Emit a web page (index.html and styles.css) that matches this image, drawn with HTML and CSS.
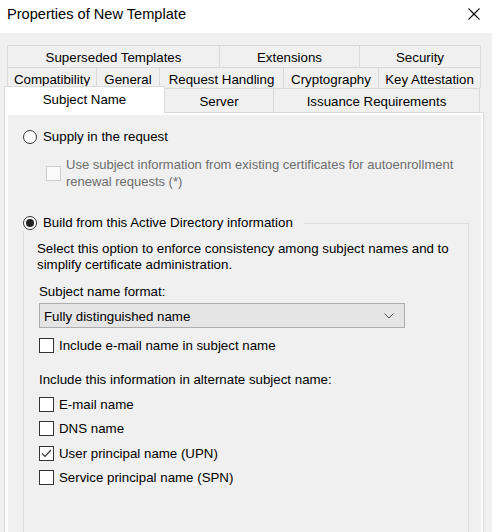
FILE: index.html
```html
<!DOCTYPE html>
<html>
<head>
<meta charset="utf-8">
<title>Properties of New Template</title>
<link rel="stylesheet" href="styles.css">
</head>
<body>
<div class="window">
  <div class="titlebar">
    <span class="title">Properties of New Template</span>
    <svg class="close" width="12" height="12" viewBox="0 0 12 12"><path d="M0.5 0.5 L11.5 11.5 M11.5 0.5 L0.5 11.5" stroke="#000" stroke-width="1.1" fill="none"/></svg>
  </div>
  <div class="tabs">
    <div class="tabrow row1">
      <div class="tab t-superseded">Superseded Templates</div>
      <div class="tab t-extensions">Extensions</div>
      <div class="tab t-security">Security</div>
    </div>
    <div class="tabrow row2">
      <div class="tab t-compat">Compatibility</div>
      <div class="tab t-general">General</div>
      <div class="tab t-request">Request Handling</div>
      <div class="tab t-crypto">Cryptography</div>
      <div class="tab t-key">Key Attestation</div>
    </div>
    <div class="tabrow row3">
      <div class="tab selected t-subject">Subject Name</div>
      <div class="tab t-server">Server</div>
      <div class="tab t-issuance">Issuance Requirements</div>
    </div>
  </div>
  <div class="panel">
    <div class="page">
      <div class="radio-row">
        <span class="radio"></span>
        <span>Supply in the request</span>
      </div>
      <div class="sub-check disabled">
        <span class="box"></span>
        <span class="sub-text">Use subject information from existing certificates for autoenrollment<br>renewal requests (*)</span>
      </div>
      <div class="group">
        <div class="legend radio-row">
          <span class="radio checked"><span class="dot"></span></span>
          <span>Build from this Active Directory information</span>
        </div>
        <div class="desc">Select this option to enforce consistency among subject names and to<br>simplify certificate administration.</div>
        <div class="label">Subject name format:</div>
        <div class="combo">
          <span>Fully distinguished name</span>
          <svg class="chev" width="10" height="6" viewBox="0 0 10 6"><path d="M0.5 0.5 L5 5 L9.5 0.5" stroke="#555" stroke-width="1" fill="none"/></svg>
        </div>
        <div class="check-row first">
          <span class="box"></span>
          <span>Include e-mail name in subject name</span>
        </div>
        <div class="label alt">Include this information in alternate subject name:</div>
        <div class="check-row list">
          <span class="box"></span>
          <span>E-mail name</span>
        </div>
        <div class="check-row list">
          <span class="box"></span>
          <span>DNS name</span>
        </div>
        <div class="check-row list">
          <span class="box"><svg width="13" height="13" viewBox="0 0 13 13"><path d="M2 6.5 L5 9.5 L11 3" stroke="#333" stroke-width="1.2" fill="none"/></svg></span>
          <span>User principal name (UPN)</span>
        </div>
        <div class="check-row list">
          <span class="box"></span>
          <span>Service principal name (SPN)</span>
        </div>
      </div>
    </div>
  </div>
</div>
</body>
</html>
```
FILE: styles.css
```css
html, body {
  margin: 0;
  padding: 0;
}
body {
  background: #f0f0f0;
  font-family: "Liberation Sans", Arial, sans-serif;
  font-size: 13.3px;
  color: #000;
  width: 492px;
  height: 532px;
  overflow: hidden;
}
.window {
  width: 492px;
  height: 532px;
  overflow: hidden;
}
.titlebar {
  height: 33px;
  background: #fff;
  display: flex;
  justify-content: space-between;
  align-items: flex-start;
  padding: 6px 12px 0 7px;
  box-sizing: border-box;
}
.title {
  font-size: 14.6px;
  line-height: 17px;
  color: #000;
}
.close {
  margin-top: 2px;
}
.tabs {
  padding-top: 12px;
}
.tabrow {
  display: flex;
  margin-left: 7px;
}
.row1 { height: 22px; }
.row2 { height: 21px; }
.row3 {
  height: 24px;
  margin-left: 4px;
  align-items: flex-start;
}
.tab {
  box-sizing: border-box;
  border: 1px solid #d9d9d9;
  border-bottom: none;
  margin-right: -1px;
  text-align: center;
  background: #f0f0f0;
  height: 100%;
  display: flex;
  align-items: center;
  justify-content: center;
  white-space: nowrap;
}
.row1 .tab { padding-top: 1px; }
.row2 .tab { padding-top: 2px; }
.row3 .tab { padding-top: 1px; }
.t-superseded { width: 213px; }
.t-extensions { width: 141px; }
.t-security { width: 122px; }
.t-compat { width: 90px; }
.t-general { width: 64px; }
.t-request { width: 125px; }
.t-crypto { width: 96px; }
.t-key { width: 103px; }
.t-subject { width: 161px; }
.t-server { width: 110px; }
.t-issuance { width: 207px; }
.tab.selected {
  background: #fff;
  height: 27px;
  margin-top: -2px;
  position: relative;
  z-index: 2;
  padding-top: 0;
  padding-bottom: 2px;
}
.panel {
  margin-left: 4px;
  width: 480px;
  height: 420px;
  box-sizing: border-box;
  border: 1px solid #d9d9d9;
  border-bottom: none;
  background: #fff;
  padding: 2px 2px 0 3px;
}
.page {
  background: #f0f0f0;
  height: 100%;
  padding: 14px 0 0 15px;
  box-sizing: border-box;
  overflow: hidden;
}
.radio-row {
  display: flex;
  align-items: center;
  gap: 6px;
  height: 16px;
  line-height: 16px;
}
.radio {
  width: 14px;
  height: 14px;
  box-sizing: border-box;
  border: 1px solid #333;
  border-radius: 50%;
  background: #fff;
  display: flex;
  align-items: center;
  justify-content: center;
  flex: none;
}
.dot {
  width: 8px;
  height: 8px;
  border-radius: 50%;
  background: #222;
}
.sub-check {
  display: flex;
  align-items: center;
  gap: 5px;
  margin: 11px 0 0 23px;
  line-height: 17px;
}
.sub-text {
  font-size: 13px;
}
.box {
  width: 15px;
  height: 15px;
  box-sizing: border-box;
  border: 1px solid #333;
  background: #fff;
  flex: none;
  display: flex;
  align-items: center;
  justify-content: center;
}
.disabled .box {
  border-color: #cccccc;
  background: #fbfbfb;
}
.disabled .sub-text {
  color: #6d6d6d;
}
.group {
  margin-top: 33px;
  width: 446px;
  height: 310px;
  box-sizing: border-box;
  border: 1px solid #dcdcdc;
  border-bottom: none;
  padding: 0 0 0 13px;
  display: flex;
  flex-direction: column;
}
.legend {
  align-self: flex-start;
  margin: -9px 0 0 -17px;
  padding: 0 11px 0 3px;
  background: #f0f0f0;
}
.desc {
  margin-top: 10px;
  line-height: 16px;
}
.label {
  margin: 11px 0 0 2px;
  line-height: 16px;
}
.combo {
  margin: 3px 0 0 2px;
  width: 366px;
  height: 25px;
  box-sizing: border-box;
  border: 1px solid #adadad;
  background: #e5e5e5;
  display: flex;
  align-items: center;
  justify-content: space-between;
  padding: 2px 10px 0 4px;
}
.chev {
  margin-top: -1px;
}
.check-row {
  display: flex;
  align-items: center;
  gap: 5px;
  height: 17px;
  margin-left: 2px;
}
.check-row.first {
  margin-top: 9px;
}
.label.alt {
  margin-top: 18px;
}
.check-row.list {
  margin-top: 7.6px;
}
```
